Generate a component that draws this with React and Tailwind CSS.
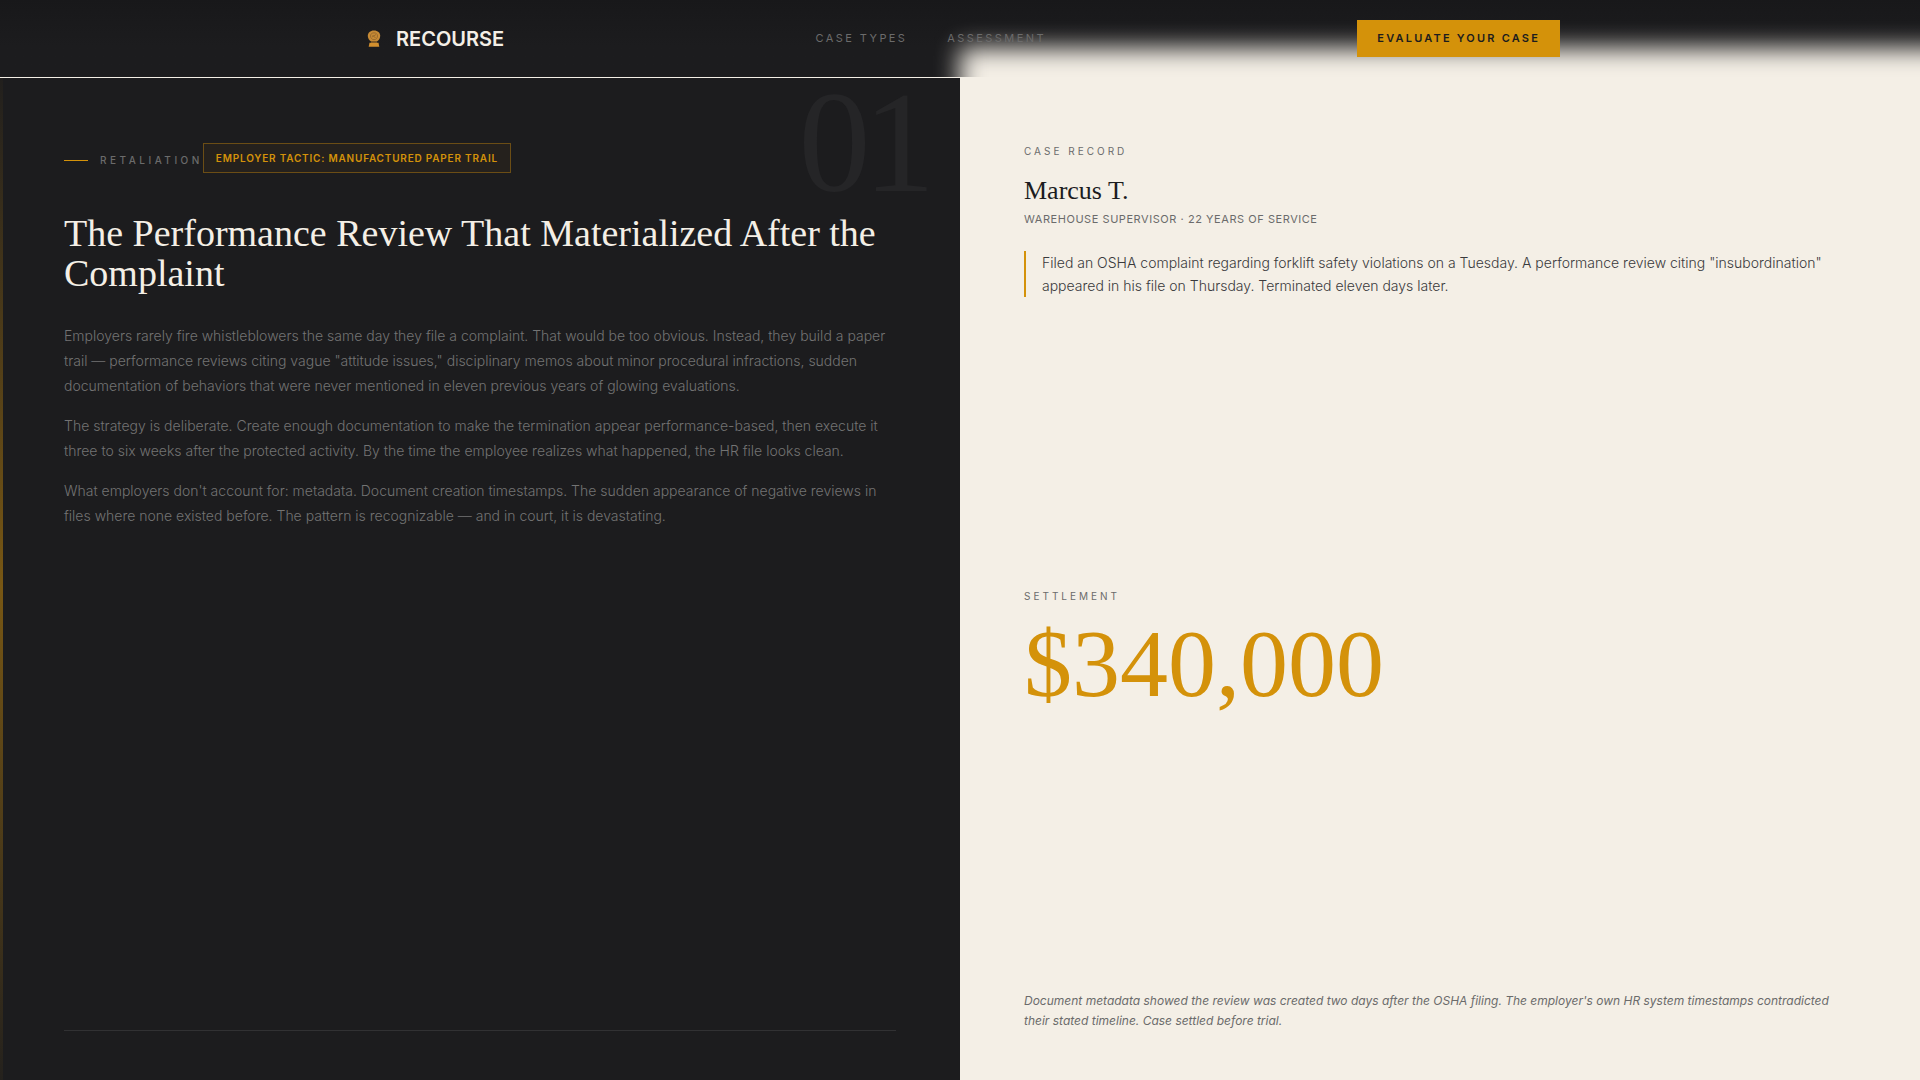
import React from 'react';

const navLinks = [
  { label: 'Case Types', href: '#case-types' },
  { label: 'Assessment', href: '#assessment' },
];

const caseStudy = {
  number: '01',
  category: 'Retaliation',
  tactic: 'Employer Tactic: Manufactured Paper Trail',
  title: 'The Performance Review That Materialized After the Complaint',
  paragraphs: [
    'Employers rarely fire whistleblowers the same day they file a complaint. That would be too obvious. Instead, they build a paper trail — performance reviews citing vague "attitude issues," disciplinary memos about minor procedural infractions, sudden documentation of behaviors that were never mentioned in eleven previous years of glowing evaluations.',
    'The strategy is deliberate. Create enough documentation to make the termination appear performance-based, then execute it three to six weeks after the protected activity. By the time the employee realizes what happened, the HR file looks clean.',
    "What employers don't account for: metadata. Document creation timestamps. The sudden appearance of negative reviews in files where none existed before. The pattern is recognizable — and in court, it is devastating.",
  ],
  client: 'Marcus T.',
  role: 'Warehouse Supervisor · 22 Years of Service',
  summary:
    'Filed an OSHA complaint regarding forklift safety violations on a Tuesday. A performance review citing "insubordination" appeared in his file on Thursday. Terminated eleven days later.',
  settlement: '$340,000',
  note: "Document metadata showed the review was created two days after the OSHA filing. The employer's own HR system timestamps contradicted their stated timeline. Case settled before trial.",
};

const LogoMark = () => (
  <svg className="h-7 w-7" viewBox="0 0 28 28" fill="none" aria-hidden="true">
    <path
      d="M14 5.500c-3.800 0-6.200 2.300-6.200 5.300 0 2.600 1.400 4.700 3.300 5.700h5.800c1.900-1 3.300-3.100 3.300-5.700 0-3-2.400-5.300-6.200-5.300z"
      fill="#c68a35"
    />
    <path
      d="M10.500 11c0-2 1.500-3.200 3.500-3.200s3.500 1.200 3.500 3.200-1.500 3.700-3.500 3.700-3.500-1.700-3.500-3.700zM12 12l4-2.500M12.500 10l3 3"
      stroke="#8f632a"
      strokeWidth="0.8"
    />
    <path d="M11 16.500h6v1.200h-6z" fill="#8a6029" />
    <path d="M9.500 17.700h9l.8 4h-10.600z" fill="#d28f2e" />
  </svg>
);

const HeaderBackdrop = () => (
  <div className="absolute inset-0 -z-10 overflow-hidden bg-linear-to-b from-[#18181a] to-[#1c1c1e] to-60%">
    <div className="ml-[50%] mt-12 h-32 w-[60%] bg-[#f4efe6] blur-md" />
  </div>
);

const Header = () => (
  <header className="fixed inset-x-0 top-0 z-10 border-b border-[#f4efe6]">
    <HeaderBackdrop />
    <div className="mx-auto flex max-w-[1200px] items-center justify-between py-5">
      <a href="#top" className="flex items-center gap-2 text-xl font-semibold leading-7 text-[#f4efe6]">
        <LogoMark />
        RECOURSE
      </a>
      <nav className="flex gap-10 text-[11px] uppercase leading-[17px] tracking-[0.22em] text-[#6b6b6b]">
        {navLinks.map((link) => (
          <a key={link.href} href={link.href}>
            {link.label}
          </a>
        ))}
      </nav>
      <button
        type="button"
        className="bg-[#d4920a] px-5 py-2.5 text-[11px] font-semibold uppercase leading-[17px] tracking-[0.2em] text-[#1c1c1e]"
      >
        Evaluate Your Case
      </button>
    </div>
  </header>
);

const StoryPanel = () => (
  <article className="relative flex flex-col justify-between bg-[#1c1c1e] px-16 py-24">
    <div className="absolute inset-y-0 left-0 w-[3px] bg-linear-to-b from-transparent via-[#d4920a] to-transparent opacity-50" />
    <div className="absolute right-8 top-4 font-['Liberation_Serif',serif] text-[144px] leading-[160px] tracking-tighter text-[#252527]">
      {caseStudy.number}
    </div>
    <div className="relative">
      <div className="mb-10 flex items-center">
        <div className="flex items-center gap-3 pt-1 text-[10px] font-medium uppercase leading-4 tracking-[0.35em] text-[#6b6b6b]">
          <span className="h-px w-6 bg-[#d4920a]" />
          {caseStudy.category}
        </div>
        <span className="border border-[#d4920a]/40 bg-[#d4920a]/5 px-3 py-1.5 text-[10px] font-semibold uppercase leading-4 tracking-[0.08em] text-[#d4920a]">
          {caseStudy.tactic}
        </span>
      </div>
      <h2 className="mb-[30px] font-['Liberation_Serif',serif] text-[38px] leading-10 text-[#f4efe6]">
        {caseStudy.title}
      </h2>
      <div className="space-y-[15px] text-sm font-light leading-[25px] text-[#737373]">
        {caseStudy.paragraphs.map((text) => (
          <p key={text}>{text}</p>
        ))}
      </div>
    </div>
    <hr className="border-[#313133]" />
  </article>
);

const RecordPanel = () => (
  <aside className="flex flex-col justify-between bg-[#f4efe6] px-16 py-24">
    <div>
      <p className="mb-4 text-[10px] uppercase leading-4 tracking-[0.3em] text-[#6b6b6b]">Case Record</p>
      <h3 className="mb-1 font-['Liberation_Serif',serif] text-[26px] leading-8 text-[#1c1c1e]">
        {caseStudy.client}
      </h3>
      <p className="mb-6 text-[11px] uppercase leading-4 tracking-wider text-[#6b6b6b]">{caseStudy.role}</p>
      <blockquote className="border-l-2 border-[#d4920a] pl-4 text-sm font-light leading-[23px] text-[#3a3a3c]">
        {caseStudy.summary}
      </blockquote>
    </div>
    <div className="pt-3">
      <p className="mb-3 text-[10px] uppercase leading-4 tracking-[0.3em] text-[#6b6b6b]">Settlement</p>
      <p className="font-['Liberation_Serif',serif] text-8xl text-[#d4920a]">{caseStudy.settlement}</p>
    </div>
    <p className="text-xs italic leading-5 text-[#6b6b6b]">{caseStudy.note}</p>
  </aside>
);

const App = () => {
  return (
    <div className="h-screen overflow-hidden bg-[#19191a] font-['Inter',sans-serif]">
      <Header />
      <main className="pt-[47px]">
        <section className="grid min-h-screen grid-cols-2">
          <StoryPanel />
          <RecordPanel />
        </section>
      </main>
    </div>
  );
};

export default App;
